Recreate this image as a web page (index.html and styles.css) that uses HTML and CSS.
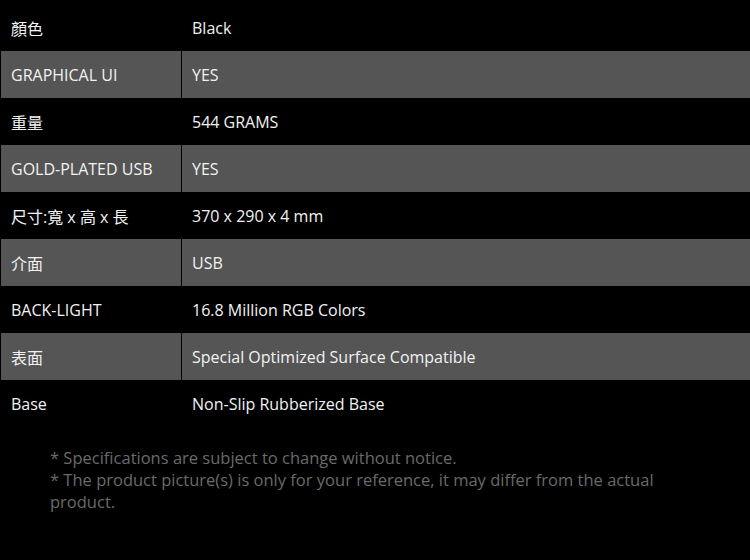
FILE: index.html
```html
<!DOCTYPE html>
<html lang="zh-Hant">
<head>
<meta charset="utf-8">
<title>Specifications</title>
<link rel="stylesheet" href="styles.css">
</head>
<body>
<div class="page">
  <table class="spec">
    <tr><td class="k">顏色</td><td class="v">Black</td></tr>
    <tr class="alt"><td class="k">GRAPHICAL UI</td><td class="v">YES</td></tr>
    <tr><td class="k">重量</td><td class="v">544 GRAMS</td></tr>
    <tr class="alt"><td class="k">GOLD-PLATED USB</td><td class="v">YES</td></tr>
    <tr><td class="k">尺寸:寬 x 高 x 長</td><td class="v">370 x 290 x 4 mm</td></tr>
    <tr class="alt"><td class="k">介面</td><td class="v">USB</td></tr>
    <tr><td class="k">BACK-LIGHT</td><td class="v">16.8 Million RGB Colors</td></tr>
    <tr class="alt"><td class="k">表面</td><td class="v">Special Optimized Surface Compatible</td></tr>
    <tr><td class="k">Base</td><td class="v">Non-Slip Rubberized Base</td></tr>
  </table>
  <div class="notes">
    <p>* Specifications are subject to change without notice.</p>
    <p>* The product picture(s) is only for your reference, it may differ from the actual product.</p>
  </div>
</div>
</body>
</html>
```
FILE: styles.css
```css
html, body {
  margin: 0;
  padding: 0;
  background: #000;
}
body {
  font-family: "Open Sans", "Noto Sans CJK TC", sans-serif;
  color: #f2f2f2;
}
.page {
  padding-top: 4px;
}
.spec {
  width: 100%;
  border-collapse: separate;
  border-spacing: 0;
}
.spec td {
  height: 47px;
  padding: 0 10px;
  font-size: 16px;
  vertical-align: middle;
  box-sizing: border-box;
}
.spec .k {
  width: 182px;
  padding-left: 10px;
  border-left: 1px solid transparent;
  border-right: 1px solid transparent;
}
.spec .v {
  padding-left: 10px;
}
.spec .alt td {
  background: #555;
}
.spec .alt .k {
  border-left-color: #000;
  border-right-color: #000;
}
.notes {
  padding: 20px 50px 0 50px;
  width: 620px;
  color: #6a6a6a;
  font-size: 16.5px;
  line-height: 22px;
}
.notes p {
  margin: 0;
}
```
